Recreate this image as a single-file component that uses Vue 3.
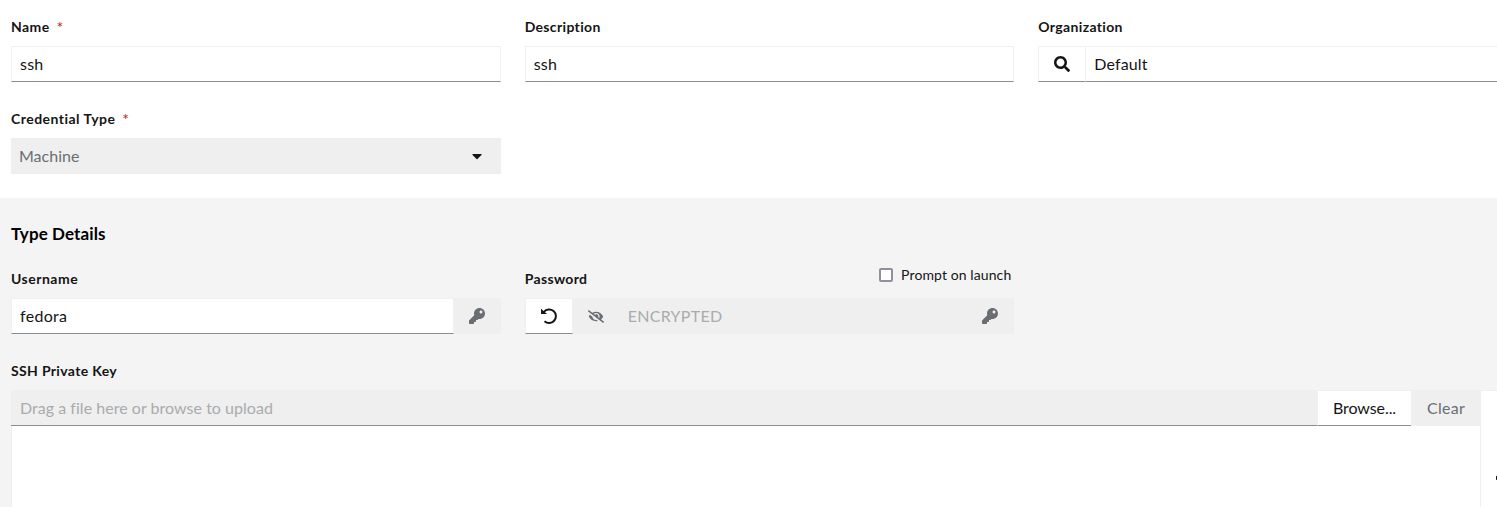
<script setup>
import { ref } from 'vue'

const name = ref('ssh')
const description = ref('ssh')
const organization = ref('Default')
const username = ref('fedora')
const prompt = ref(false)

const keyPath = 'M512 176c0 97.2-78.8 176-176 176-11.2 0-22.2-1.1-32.8-3.1l-24 27A24 24 0 0 1 261.2 384H224v40c0 13.3-10.7 24-24 24h-40v40c0 13.3-10.7 24-24 24H24c-13.3 0-24-10.7-24-24v-78.1c0-6.3 2.5-12.4 7-16.9l161.8-161.8C163.1 213.8 160 195.3 160 176 160 78.8 238.8 0 336 0c97.5 0 176 78.5 176 176zM336 128c0 26.5 21.5 48 48 48s48-21.5 48-48-21.5-48-48-48-48 21.5-48 48z'
const searchPath = 'M505 442.7L405.3 343c-4.5-4.5-10.6-7-17-7H372c27.6-35.3 44-79.7 44-128C416 93.1 322.9 0 208 0S0 93.1 0 208s93.1 208 208 208c48.3 0 92.7-16.4 128-44v16.3c0 6.4 2.5 12.5 7 17l99.7 99.7c9.4 9.4 24.6 9.4 33.9 0l28.3-28.3c9.4-9.4 9.4-24.6.1-34zM208 336c-70.7 0-128-57.2-128-128 0-70.7 57.2-128 128-128 70.7 0 128 57.2 128 128 0 70.7-57.2 128-128 128z'
const eyePath = 'M320 400c-75.85 0-137.25-58.71-142.9-133.11L72.2 185.82c-13.79 17.3-26.48 35.59-36.72 55.59a32.35 32.35 0 0 0 0 29.19C89.71 376.41 197.07 448 320 448c26.91 0 52.87-4 77.89-10.46L346 397.39a144.13 144.13 0 0 1-26 2.61zm313.82 58.1l-110.55-85.44a331.25 331.25 0 0 0 81.25-102.07 32.35 32.35 0 0 0 0-29.19C550.29 135.59 442.93 64 320 64a308.15 308.15 0 0 0-147.32 37.7L45.46 3.37A16 16 0 0 0 23 6.18L3.37 31.45A16 16 0 0 0 6.18 53.9l588.36 454.73a16 16 0 0 0 22.46-2.81l19.64-25.27a16 16 0 0 0-2.82-22.45zm-183.72-142l-39.3-30.38A94.75 94.75 0 0 0 416 256a94.76 94.76 0 0 0-121.31-92.21A47.65 47.65 0 0 1 304 192a46.64 46.64 0 0 1-1.54 10l-73.61-56.89A142.31 142.31 0 0 1 320 112a143.92 143.92 0 0 1 144 144c0 21.63-5.29 41.79-13.9 60.11z'
</script>

<template>
  <form class="page" @submit.prevent>
    <section class="main">
      <div class="field">
        <label class="label" for="name">Name<span class="req">*</span></label>
        <input id="name" v-model="name" class="input w-ssh">
      </div>
      <div class="field">
        <label class="label desc" for="desc">Description</label>
        <input id="desc" v-model="description" class="input w-ssh">
      </div>
      <div class="field">
        <label class="label desc" for="org">Organization</label>
        <div class="group">
          <button class="control search" type="button" aria-label="Search">
            <svg width="16" height="16" viewBox="0 0 512 512"><path :d="searchPath" /></svg>
          </button>
          <input id="org" v-model="organization" class="input w-org">
        </div>
      </div>
      <div class="field">
        <span class="label cred">Credential Type<span class="req">*</span></span>
        <div class="select">
          <span>Machine</span>
          <svg width="10" height="16" viewBox="0 0 320 512"><path d="M31.3 192h257.3c17.8 0 26.7 21.5 14.1 34.1L174.1 354.8c-7.8 7.8-20.5 7.8-28.3 0L17.2 226.1C4.6 213.5 13.5 192 31.3 192z" /></svg>
        </div>
      </div>
    </section>

    <section class="details">
      <h2 class="title">Type Details</h2>
      <div class="grid">
        <div class="field">
          <label class="label user" for="user">Username</label>
          <div class="group">
            <input id="user" v-model="username" class="input w-user">
            <button class="control off narrow" type="button" aria-label="Username source">
              <svg width="16" height="16" viewBox="0 0 512 512"><path :d="keyPath" /></svg>
            </button>
          </div>
        </div>
        <div class="field">
          <div class="label-row">
            <span class="label pass">Password</span>
            <label class="check"><input v-model="prompt" type="checkbox" class="box"><span>Prompt on launch</span></label>
          </div>
          <div class="group">
            <button class="control" type="button" aria-label="Replace">
              <svg width="16" height="16" viewBox="0 0 16 16">
                <path d="M2.9 3.8A6.8 6.8 0 1 1 3.5 13.2" fill="none" stroke="currentColor" stroke-width="2" />
                <path d="M0 .7 6.1 5.9H.5A.5.5 0 0 1 0 5.4Z" />
              </svg>
            </button>
            <button class="control off eye" type="button" aria-label="Toggle visibility">
              <svg width="16" height="13" viewBox="0 0 640 512"><path :d="eyePath" /></svg>
            </button>
            <div class="encrypted">ENCRYPTED</div>
            <button class="control off" type="button" aria-label="Password source">
              <svg width="16" height="16" viewBox="0 0 512 512"><path :d="keyPath" /></svg>
            </button>
          </div>
        </div>
      </div>

      <div class="field ssh-key">
        <span class="label desc">SSH Private Key</span>
        <div class="upload">
          <div class="file">
            <div class="file-bar">
              <div class="drop">Drag a file here or browse to upload</div>
              <button class="browse" type="button">Browse...</button>
              <button class="clear" type="button">Clear</button>
            </div>
            <div class="area"></div>
          </div>
          <button class="side" type="button" aria-label="Key source">
            <svg width="16" height="16" viewBox="0 0 512 512"><path :d="keyPath" /></svg>
          </button>
        </div>
      </div>
    </section>
  </form>
</template>

<style>
html, body { overflow: hidden; }
</style>

<style scoped>
.page, .page * { box-sizing: border-box; }
.page {
  height: 507px;
  overflow: hidden;
  background: #fff;
  color: #151515;
  font: 400 16px/24px Lato, "Liberation Sans", sans-serif;
  font-variant-ligatures: none;
}
svg { display: block; fill: currentColor; flex: none; }
button, input { font: inherit; font-variant-ligatures: none; color: inherit; margin: 0; border-radius: 0; outline: 0; }
.main {
  display: grid;
  grid-template-columns: repeat(3, 489.67px);
  gap: 24px;
  padding: 14px 0 24px 11px;
  height: 198px;
}
.field { display: flex; flex-direction: column; height: 68px; }
.label { height: 32px; line-height: 26px; font-size: 14px; font-weight: 700; letter-spacing: .4px; white-space: nowrap; }
.desc, .pass { letter-spacing: .34px; }
.cred { letter-spacing: .47px; }
.user { letter-spacing: .5px; }
.req { margin-left: 7px; color: #c9190b; font-weight: 400; font-size: 16px; line-height: 16px; letter-spacing: 0; vertical-align: -1px; }
.input {
  flex: 1;
  width: 100%;
  min-width: 0;
  height: 36px;
  min-height: 36px;
  padding: 0 8px 2px;
  background: #fff;
  border: 1px solid #f0f0f0;
  border-bottom-color: #8a8d90;
}
.w-ssh { letter-spacing: .25px; }
.w-org { letter-spacing: .12px; }
.w-user { letter-spacing: .3px; }
.group { display: flex; height: 36px; }
.control {
  flex: none;
  display: flex;
  align-items: center;
  justify-content: center;
  width: 48px;
  height: 36px;
  padding: 0;
  background: #fff;
  border: 1px solid #f0f0f0;
  border-bottom-color: #8a8d90;
}
.search { width: 47px; border-right: 0; }
.off { background: #efefef; border-color: #efefef; color: #6a6e73; }
.narrow { width: 47px; border-left: 0; }
.eye { padding-right: 2px; }
.select {
  display: flex;
  align-items: center;
  justify-content: space-between;
  height: 36px;
  padding: 0 19px 0 8px;
  background: #efefef;
  color: #6a6e73;
}
.select svg { color: #151515; }
.details { height: 309px; padding: 24px 0 0 11px; background: #f4f4f4; }
.title { margin: 0 0 20px; height: 24px; font-size: 17px; line-height: 24px; font-weight: 700; letter-spacing: .1px; color: #000; }
.grid { display: grid; grid-template-columns: repeat(3, 489.67px); gap: 24px; }
.label-row { display: flex; justify-content: space-between; height: 32px; }
.check { display: flex; align-items: center; gap: 8px; height: 18px; padding-right: 3px; font-size: 14px; letter-spacing: .1px; }
.box { appearance: none; width: 14px; height: 14px; background: #fff; border: 2px solid #8f8f9d; border-radius: 2px; }
.encrypted { flex: 1; padding-left: 7px; line-height: 36px; letter-spacing: .3px; color: #aaabac; background: #efefef; }
.ssh-key { margin-top: 24px; height: auto; }
.upload { display: flex; width: 1517px; height: 164px; }
.file { flex: none; display: flex; flex-direction: column; width: 1470px; }
.file-bar { display: flex; height: 36px; background: #efefef; }
.drop { flex: 1; padding-left: 9px; line-height: 36px; letter-spacing: .03px; color: #aaabac; border-bottom: 1px solid #8a8d90; }
.browse { width: 94px; padding: 0; background: #fff; border: 1px solid #f0f0f0; border-right: 0; border-bottom-color: #8a8d90; letter-spacing: -.08px; }
.clear { width: 70px; padding: 0; background: #efefef; border: 0; color: #6a6e73; letter-spacing: .25px; }
.area { flex: 1; background: #fff; border: 1px solid #efefef; border-top: 0; }
.side { flex: 1; padding: 0 0 0 15px; background: #fff; border: 1px solid #f0f0f0; border-left: 0; }
</style>
